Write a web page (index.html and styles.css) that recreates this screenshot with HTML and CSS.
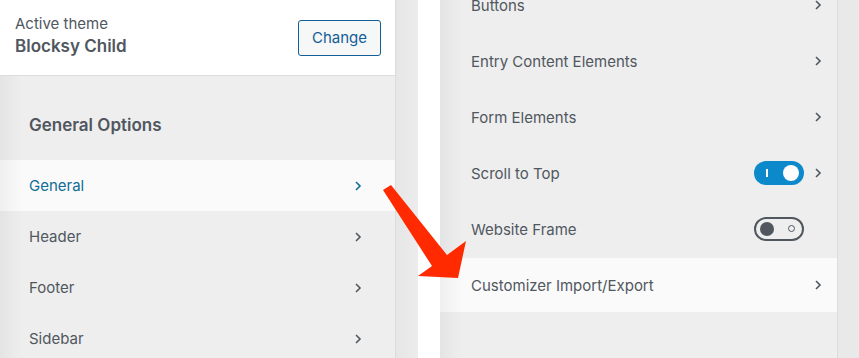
FILE: index.html
```html
<html>

<head>
	<title>Customizer</title>
	<link rel="stylesheet" href="styles.css">
</head>
<body>
	<div class="page">
		<div class="panel left">
			<div class="theme">
				<div class="theme-info">
					<div class="theme-label">Active theme</div>
					<div class="theme-name">Blocksy Child</div>
				</div>
				<button class="change">Change</button>
			</div>
			<div class="section-title">General Options</div>
			<div class="nav-row active">
				<span>General</span>
				<svg class="chev" width="8" height="12" viewBox="0 0 8 12"><polyline points="2,2 6,6 2,10"/></svg>
			</div>
			<div class="nav-row">
				<span>Header</span>
				<svg class="chev" width="8" height="12" viewBox="0 0 8 12"><polyline points="2,2 6,6 2,10"/></svg>
			</div>
			<div class="nav-row">
				<span>Footer</span>
				<svg class="chev" width="8" height="12" viewBox="0 0 8 12"><polyline points="2,2 6,6 2,10"/></svg>
			</div>
			<div class="nav-row">
				<span>Sidebar</span>
				<svg class="chev" width="8" height="12" viewBox="0 0 8 12"><polyline points="2,2 6,6 2,10"/></svg>
			</div>
		</div>

		<div class="strip"></div>
		<div class="gap"></div>

		<div class="panel right">
			<div class="opt-row first">
				<span>Buttons</span>
				<svg class="chev" width="8" height="12" viewBox="0 0 8 12"><polyline points="2,2 6,6 2,10"/></svg>
			</div>
			<div class="opt-row">
				<span>Entry Content Elements</span>
				<svg class="chev" width="8" height="12" viewBox="0 0 8 12"><polyline points="2,2 6,6 2,10"/></svg>
			</div>
			<div class="opt-row">
				<span>Form Elements</span>
				<svg class="chev" width="8" height="12" viewBox="0 0 8 12"><polyline points="2,2 6,6 2,10"/></svg>
			</div>
			<div class="opt-row">
				<span>Scroll to Top</span>
				<div class="controls">
					<div class="toggle on"><i class="bar"></i><i class="knob"></i></div>
					<svg class="chev" width="8" height="12" viewBox="0 0 8 12"><polyline points="2,2 6,6 2,10"/></svg>
				</div>
			</div>
			<div class="opt-row">
				<span>Website Frame</span>
				<div class="controls">
					<div class="toggle off"><i class="knob"></i><i class="ring"></i></div>
					<span class="chev-space"></span>
				</div>
			</div>
			<div class="opt-row active">
				<span>Customizer Import/Export</span>
				<svg class="chev" width="8" height="12" viewBox="0 0 8 12"><polyline points="2,2 6,6 2,10"/></svg>
			</div>
		</div>

		<div class="edge"></div>
	</div>

	<svg class="arrow" width="859" height="358" viewBox="0 0 859 358">
		<polygon points="383,190 391,185 447,255 466,241 458,278 418,276 432,266"/>
	</svg>
</body>
</html>
```

FILE: styles.css
```css
body{
	margin: 0;
	font-family: 'Inter', 'Liberation Sans', sans-serif;
	color: #50575e;
	background-color: #ffffff;
	overflow: hidden;
}

.page{
	display: flex;
	height: 358px;
}

.panel{
	position: relative;
	background-color: #eeeeee;
}

.panel::before{
	content: "";
	position: absolute;
	top: 0;
	bottom: 0;
	left: 0;
	width: 22px;
	background: linear-gradient(to right, rgba(0,0,0,0.045), rgba(0,0,0,0));
	pointer-events: none;
}

.left{
	width: 395px;
	border-right: 1px solid #dcdcde;
}

.theme{
	display: flex;
	justify-content: space-between;
	align-items: center;
	height: 76px;
	padding: 0 14px 0 15px;
	background-color: #ffffff;
	border-bottom: 1px solid #dcdcde;
	box-sizing: border-box;
	position: relative;
	z-index: 1;
}

.theme-info{
	margin-bottom: 4px;
}

.theme-label{
	font-size: 15px;
	line-height: 20px;
}

.theme-name{
	font-size: 17px;
	font-weight: 600;
	line-height: 24px;
}

.change{
	width: 83px;
	height: 36px;
	font-family: inherit;
	font-size: 15px;
	color: #135e96;
	background-color: #f6f7f7;
	border: 1px solid #135e96;
	border-radius: 3px;
	padding: 0;
}

.section-title{
	height: 84px;
	padding: 38px 0 0 29px;
	box-sizing: border-box;
	font-size: 17px;
	font-weight: 600;
	line-height: 22px;
}

.nav-row{
	display: flex;
	justify-content: space-between;
	align-items: center;
	height: 51px;
	padding: 0 33px 0 29px;
	font-size: 15px;
}

.nav-row.active{
	background-color: #fafafa;
	color: #0f6d95;
}

.chev{
	fill: none;
	stroke: currentColor;
	stroke-width: 1.6;
}

.strip{
	width: 22px;
	background: linear-gradient(to right, #e6e6e6, #ececec);
}

.gap{
	width: 22px;
	background-color: #ffffff;
}

.right{
	width: 397px;
	border-right: 1px solid #dcdcde;
	margin-top: -23px;
}

.opt-row{
	display: flex;
	justify-content: space-between;
	align-items: center;
	height: 56px;
	padding: 0 15px 0 31px;
	font-size: 15px;
}

.opt-row.active{
	background-color: #fafafa;
	height: 54px;
	margin-top: 1px;
}

.controls{
	display: flex;
	align-items: center;
	gap: 10px;
}

.chev-space{
	width: 8px;
}

.toggle{
	position: relative;
	width: 50px;
	height: 24px;
	border-radius: 12px;
	box-sizing: border-box;
}

.toggle.on{
	background-color: #0b89cb;
}

.toggle.on .bar{
	position: absolute;
	left: 12px;
	top: 8px;
	width: 2px;
	height: 8px;
	background-color: #ffffff;
}

.toggle.on .knob{
	position: absolute;
	right: 5px;
	top: 4px;
	width: 16px;
	height: 16px;
	border-radius: 50%;
	background-color: #ffffff;
}

.toggle.off{
	border: 2px solid #50575e;
}

.toggle.off .knob{
	position: absolute;
	left: 4px;
	top: 3px;
	width: 14px;
	height: 14px;
	border-radius: 50%;
	background-color: #50575e;
}

.toggle.off .ring{
	position: absolute;
	right: 7px;
	top: 6px;
	width: 5px;
	height: 5px;
	border-radius: 50%;
	border: 1.5px solid #50575e;
}

.edge{
	flex: 1;
	background-color: #e9e9e9;
}

.arrow{
	position: absolute;
	top: 0;
	left: 0;
}

.arrow polygon{
	fill: #ff2a00;
}
```
